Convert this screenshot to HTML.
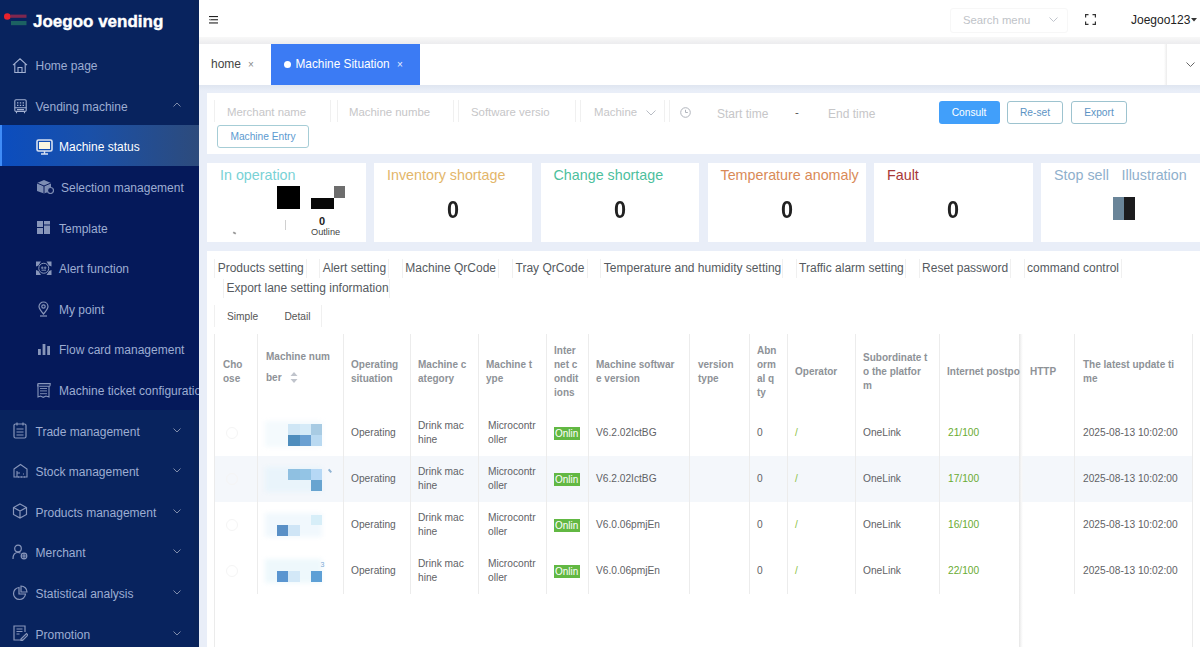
<!DOCTYPE html>
<html><head><meta charset="utf-8">
<style>
*{box-sizing:border-box;margin:0;padding:0}
html,body{width:1200px;height:647px;overflow:hidden;background:#e9eef8;font-family:"Liberation Sans",sans-serif;position:relative}
.abs{position:absolute}
#sb{position:absolute;left:0;top:0;width:199px;height:647px;background:#08235e;overflow:hidden}
#sb .edge{position:absolute;right:0;top:0;width:5px;height:647px;background:#09235a}
.logo{position:absolute;left:33px;top:11.7px;-webkit-text-stroke:0.4px #fff;color:#fff;font-weight:700;font-size:17px;letter-spacing:0px;white-space:nowrap}
.mi{position:absolute;left:0;width:199px;height:40.6px;color:#9dadd2;font-size:12px;white-space:nowrap}
.mi span{position:absolute;left:35.5px;top:15px}
.mi svg{position:absolute}
.sub{position:absolute;left:0;top:125.4px;width:199px;height:284.2px;background:#05195a}
.mi.s span{left:59px}
.mi.act{background:linear-gradient(90deg,#0b4dbf 0%,#1a50a8 45%,#2d4b7c 100%);color:#fff}
.mi.act:before{content:"";position:absolute;left:0;top:0;width:2px;height:100%;background:#3f8cf8}
.chev{position:absolute;left:173px;top:16px;width:8px;height:8px}
#hd{position:absolute;left:199px;top:0;width:1001px;height:38px;background:#fff}
#gap{position:absolute;left:199px;top:37px;width:1001px;height:7px;background:linear-gradient(#f8f8f8,#ececee)}
#tabs{position:absolute;left:199px;top:43.6px;width:1001px;height:41px;background:#fff}
.card{position:absolute;background:#fff}
.ph{position:absolute;color:#c6c6c8;font-size:11.4px;white-space:nowrap;margin-top:1px}
.inp{position:absolute;top:7px;height:22px;border-left:1px solid #f0f0f0;border-right:1px solid #f0f0f0}
.btn{position:absolute;height:23px;border-radius:3px;font-size:10.2px;text-align:center;line-height:21px;white-space:nowrap}
.sc-t{position:absolute;left:13px;top:4px;font-size:14.3px;white-space:nowrap}
.sc-n{position:absolute;left:0;width:158px;top:33px;text-align:center;font-weight:700;font-size:24px;color:#222;transform:scaleX(0.9)}
.tb{position:absolute;top:0;font-size:12px;color:#555a60;white-space:nowrap}
.th{position:absolute;top:334px;height:76px;font-weight:700;font-size:10px;color:#8e9297;line-height:14px}
.col{position:absolute;top:334px;width:1px;height:313px;background:#ececec}
.tbx{position:absolute;height:19px;border-left:1px solid #f0f0f0;border-right:1px solid #f0f0f0}
.badge{position:absolute;height:13px;width:25.5px;background:#62b843;color:#fff;font-size:10px;line-height:13px;padding-left:1px;overflow:hidden;white-space:nowrap}
.td{position:absolute;font-size:10.2px;color:#5f6266;line-height:14px;white-space:nowrap}
</style></head><body>

<!-- SIDEBAR -->
<div id="sb">
  <div class="edge"></div>
  <!-- logo -->
  <svg class="abs" style="left:3px;top:11px" width="26" height="16" viewBox="0 0 26 16">
    <rect x="7.5" y="3.6" width="16" height="3.2" fill="#b02a4a" opacity=".7"/>
    <rect x="8" y="10" width="15.5" height="4.2" fill="#2a8a66" opacity=".6"/>
    <circle cx="4.3" cy="5.5" r="3.3" fill="#e8222c"/>
  </svg>
  <div class="logo">Joegoo vending</div>

  <div class="sub"></div>

  <div class="mi" style="top:44.2px">
    <svg style="left:12px;top:13.5px" width="16" height="16" viewBox="0 0 16 16" fill="none" stroke="#a3b1d2" stroke-width="1.1"><path d="M1 7.2 L8 0.8 L15 7.2 M2.8 5.8 V14.5 H13.2 V5.8 M6 14.5 V9.5 H10 V14.5"/></svg>
    <span>Home page</span></div>
  <div class="mi" style="top:84.8px">
    <svg style="left:13.5px;top:14px" width="13" height="15" viewBox="0 0 13 15" fill="none" stroke="#a3b1d2" stroke-width="1.1"><rect x="0.8" y="0.8" width="11.4" height="11.6" rx="1.2"/><path d="M3 3.8h1.4M5.8 3.8h1.4M8.6 3.8h1.4M3 6.4h1.4M5.8 6.4h1.4M8.6 6.4h1.4" stroke-width="1.3"/><path d="M0.8 8.8h11.4M3 10.6h7M2.5 12.4v1.8M10.5 12.4v1.8"/></svg>
    <span>Vending machine</span>
    <svg class="chev" viewBox="0 0 8 8" fill="none" stroke="#7f8cab" stroke-width="1"><path d="M0.5 5.5 L4 2 L7.5 5.5"/></svg></div>

  <div class="mi s act" style="top:125.4px">
    <svg style="left:36px;top:14px" width="17" height="16" viewBox="0 0 17 16"><rect x="1" y="1" width="15" height="11" rx="1.5" fill="none" stroke="#d9e2f2" stroke-width="1.6"/><rect x="3" y="3" width="11" height="7" fill="#fbf6e0"/><path d="M8.5 12v3M5 15h7" stroke="#d9e2f2" stroke-width="1.4"/></svg>
    <span style="top:15px">Machine status</span></div>
  <div class="mi s" style="top:166px">
    <svg style="left:36px;top:13px" width="18" height="15" viewBox="0 0 18 15"><path d="M1 4 L8 1 L15 4 L15 12 L8 14.5 L1 12Z" fill="#7d8db3"/><path d="M1 4 L8 7 L15 4 M8 7V14.5" stroke="#0a1b5c" stroke-width="1" fill="none"/><circle cx="14.5" cy="11.5" r="3" fill="#0a1b5c" stroke="#7d8db3" stroke-width="1.2"/></svg>
    <span style="left:61px">Selection management</span></div>
  <div class="mi s" style="top:206.6px">
    <svg style="left:37px;top:14px" width="13" height="13" viewBox="0 0 13 13" fill="#8896ba"><rect x="0" y="0" width="6" height="6"/><rect x="7" y="0" width="6" height="3.5"/><rect x="7" y="4.5" width="6" height="8.5"/><rect x="0" y="7" width="6" height="6"/></svg>
    <span>Template</span></div>
  <div class="mi s" style="top:247.2px">
    <svg style="left:36px;top:14px" width="16" height="15" viewBox="0 0 16 15"><g fill="#8896ba"><path d="M0 0.5h5L2.5 4.5 0 5.5Z"/><path d="M15.5 0.5h-5L13 4.5 15.5 5.5Z"/><path d="M0 14h5L2.5 10 0 9Z"/><path d="M15.5 14h-5L13 10 15.5 9Z"/></g><g fill="none" stroke="#8896ba" stroke-width="1"><circle cx="7.75" cy="7.25" r="5"/></g><g fill="#6f7fa8"><circle cx="6.3" cy="6.8" r="1.2"/><circle cx="9.2" cy="6.8" r="1.2"/><rect x="5.5" y="8.6" width="4.5" height="1.2"/></g></svg>
    <span>Alert function</span></div>
  <div class="mi s" style="top:287.8px">
    <svg style="left:38px;top:13px" width="11" height="16" viewBox="0 0 11 16" fill="none" stroke="#8896ba" stroke-width="1.2"><path d="M5.5 13 C2 9 1 7 1 5.5 A4.5 4.5 0 0 1 10 5.5 C10 7 9 9 5.5 13Z"/><circle cx="5.5" cy="5.5" r="1.7"/><path d="M2 15h7"/></svg>
    <span>My point</span></div>
  <div class="mi s" style="top:328.4px">
    <svg style="left:38px;top:15.5px" width="12" height="12" viewBox="0 0 12 12" fill="#8896ba"><rect x="0" y="5" width="2.8" height="6"/><rect x="4.6" y="0" width="2.8" height="11"/><rect x="9.2" y="2" width="2.8" height="9"/></svg>
    <span>Flow card management</span></div>
  <div class="mi s" style="top:369px">
    <svg style="left:37px;top:14px" width="14" height="15" viewBox="0 0 14 15" fill="none" stroke="#8896ba" stroke-width="1.1"><path d="M0.8 3.5V1.2Q0.8 0.6 1.5 0.6H13.2Q13.2 3.3 12.5 3.3H2.2"/><path d="M1 1.5V14L3.5 13 6.2 14.3 9 13 12 14V3.3"/><path d="M3 5.5h7M3 7.9h7M3 10.7h7" stroke-width="0.9"/></svg>
    <span>Machine ticket configuration</span></div>

  <div class="mi" style="top:409.6px">
    <svg style="left:13px;top:12px" width="14" height="17" viewBox="0 0 14 17" fill="none" stroke="#8896ba" stroke-width="1.2"><rect x="1" y="2" width="12" height="14" rx="1.5"/><path d="M4 0.5v3M10 0.5v3M3.5 7h7M3.5 10h7M3.5 13h7"/></svg>
    <span>Trade management</span>
    <svg class="chev" viewBox="0 0 8 8" fill="none" stroke="#7f8cab" stroke-width="1"><path d="M0.5 2.5 L4 6 L7.5 2.5"/></svg></div>
  <div class="mi" style="top:450.2px">
    <svg style="left:13px;top:13px" width="15" height="15" viewBox="0 0 15 15" fill="none" stroke="#8896ba" stroke-width="1.1"><path d="M1 6 L7.5 1.5 L14 6 V14 H1Z"/><path d="M4 14V8M4 10h3M5 14h1M8 14h1M11 14h1M10 11h1"/></svg>
    <span>Stock management</span>
    <svg class="chev" viewBox="0 0 8 8" fill="none" stroke="#7f8cab" stroke-width="1"><path d="M0.5 2.5 L4 6 L7.5 2.5"/></svg></div>
  <div class="mi" style="top:490.8px">
    <svg style="left:12px;top:12.5px" width="16" height="16" viewBox="0 0 16 16" fill="none" stroke="#8896ba" stroke-width="1.2"><path d="M8 1 L14.5 4.5 V11.5 L8 15 L1.5 11.5 V4.5Z M1.5 4.5 L8 8 L14.5 4.5 M8 8 V15"/></svg>
    <span>Products management</span>
    <svg class="chev" viewBox="0 0 8 8" fill="none" stroke="#7f8cab" stroke-width="1"><path d="M0.5 2.5 L4 6 L7.5 2.5"/></svg></div>
  <div class="mi" style="top:531.4px">
    <svg style="left:12px;top:13px" width="16" height="16" viewBox="0 0 16 16" fill="none" stroke="#8896ba" stroke-width="1.2"><circle cx="6" cy="4.5" r="3.3"/><path d="M1 15 C1 10 3 8.5 6 8.5 C7 8.5 8 8.8 8.5 9.2"/><circle cx="12" cy="12" r="2.8"/><path d="M12 9.2v5.6M9.3 12h5.4"/></svg>
    <span>Merchant</span>
    <svg class="chev" viewBox="0 0 8 8" fill="none" stroke="#7f8cab" stroke-width="1"><path d="M0.5 2.5 L4 6 L7.5 2.5"/></svg></div>
  <div class="mi" style="top:572px">
    <svg style="left:12px;top:12.5px" width="16" height="16" viewBox="0 0 16 16" fill="none" stroke="#8896ba" stroke-width="1.2"><path d="M7 2.5 A6 6 0 1 0 13.5 9 H7Z"/><path d="M9 1 A6 6 0 0 1 15 7 H9Z"/></svg>
    <span>Statistical analysis</span>
    <svg class="chev" viewBox="0 0 8 8" fill="none" stroke="#7f8cab" stroke-width="1"><path d="M0.5 2.5 L4 6 L7.5 2.5"/></svg></div>
  <div class="mi" style="top:612.6px">
    <svg style="left:13px;top:12.5px" width="15" height="16" viewBox="0 0 15 16" fill="none" stroke="#8896ba" stroke-width="1.2"><path d="M10 15H1V1h11v6"/><path d="M3.5 4h6M3.5 6.5h6M3.5 9h3"/><path d="M8 14 L13.5 8.5 L15 10 L9.5 15.5 H8Z"/></svg>
    <span>Promotion</span>
    <svg class="chev" viewBox="0 0 8 8" fill="none" stroke="#7f8cab" stroke-width="1"><path d="M0.5 2.5 L4 6 L7.5 2.5"/></svg></div>
</div>

<!-- HEADER -->
<div id="hd">
  <svg class="abs" style="left:9.5px;top:15.6px" width="10" height="8" viewBox="0 0 10 8" fill="#222"><rect x="0" y="0" width="9" height="1.1"/><rect x="1.8" y="3.2" width="7.2" height="1.1"/><rect x="0" y="6.4" width="9" height="1.1"/><path d="M0 3.75 L1.4 2.8 V4.7Z"/></svg>
  <div class="abs" style="left:751px;top:8px;width:118px;height:25px;border:1px solid #f7f7f7;border-radius:3px"></div>
  <div class="ph" style="left:764px;top:13px;font-size:11.3px;color:#c0c3c8">Search menu</div>
  <svg class="abs" style="left:850px;top:17px" width="9" height="6" viewBox="0 0 9 6" fill="none" stroke="#c0c4cc" stroke-width="1"><path d="M0.5 0.5 L4.5 4.5 L8.5 0.5"/></svg>
  <svg class="abs" style="left:886px;top:14px" width="11" height="11" viewBox="0 0 11 11" fill="none" stroke="#333" stroke-width="1.2"><path d="M0.6 3.5V0.6H3.5M7.5 0.6H10.4V3.5M10.4 7.5V10.4H7.5M3.5 10.4H0.6V7.5"/></svg>
  <div class="abs" style="left:932px;top:12.5px;font-size:12px;color:#222;white-space:nowrap">Joegoo123</div>
  <svg class="abs" style="left:992px;top:18px" width="6" height="4" viewBox="0 0 6 4" fill="#333"><path d="M0 0H6L3 3.5Z"/></svg>
</div>
<div id="gap"></div>

<!-- TABS -->
<div id="tabs">
  <div class="abs" style="left:12px;top:13px;font-size:12px;color:#444;white-space:nowrap">home</div>
  <div class="abs" style="left:49px;top:15.5px;font-size:10px;color:#888">×</div>
  <div class="abs" style="left:72px;top:0;width:149px;height:41px;background:#3b7bf4"></div>
  <div class="abs" style="left:85px;top:17.5px;width:7px;height:7px;border-radius:50%;background:#fff"></div>
  <div class="abs" style="left:96.5px;top:13.7px;font-size:11.85px;color:#fff;white-space:nowrap">Machine Situation</div>
  <div class="abs" style="left:198px;top:15.5px;font-size:10px;color:#e8efff">×</div>
  <div class="abs" style="left:965px;top:0;width:3px;height:41px;background:linear-gradient(90deg,rgba(240,240,240,0),#ececec)"></div>
  <svg class="abs" style="left:986.5px;top:18px" width="9" height="5.5" viewBox="0 0 9 5.5" fill="none" stroke="#666" stroke-width="1"><path d="M0.5 0.5 L4.5 4.5 L8.5 0.5"/></svg>
</div>

<div class="abs" style="left:199px;top:84.6px;width:1001px;height:6px;background:linear-gradient(#dfe5f0,#e9eef8)"></div>
<!-- FILTER CARD -->
<div class="card" style="left:207px;top:93px;width:993px;height:61px">
  <div class="inp" style="left:7px;width:117px"></div>
  <div class="inp" style="left:129.5px;width:117px"></div>
  <div class="inp" style="left:251px;width:118px"></div>
  <div class="inp" style="left:373px;width:85px"></div>
  <div class="inp" style="left:462px;width:250px;border-right:none"></div>
  <div class="ph" style="left:20px;top:12px">Merchant name</div>
  <div class="ph" style="left:142px;top:12px">Machine numbe</div>
  <div class="ph" style="left:264px;top:12px">Software versio</div>
  <div class="ph" style="left:387px;top:12px">Machine</div>
  <svg class="abs" style="left:439px;top:17px" width="10" height="6" viewBox="0 0 10 6" fill="none" stroke="#b8bcc4" stroke-width="1"><path d="M0.5 0.5 L5 5 L9.5 0.5"/></svg>
  <svg class="abs" style="left:472.5px;top:13.5px" width="11" height="11" viewBox="0 0 11 11" fill="none" stroke="#b0b4bc" stroke-width="1"><circle cx="5.5" cy="5.5" r="4.8"/><path d="M5.5 2.8V5.5H7.8"/></svg>
  <div class="ph" style="left:510px;top:12.5px;font-size:12px">Start time</div>
  <div class="ph" style="left:588px;top:12px;color:#555">-</div>
  <div class="ph" style="left:621px;top:12.5px;font-size:12px">End time</div>
  <div class="btn" style="left:731.5px;top:8px;width:61px;background:#419ffa;color:#fff;line-height:23px">Consult</div>
  <div class="btn" style="left:800px;top:8px;width:56px;border:1px solid #9dc3cf;color:#5b93c4">Re-set</div>
  <div class="btn" style="left:864px;top:8px;width:56px;border:1px solid #9dc3cf;color:#5b93c4">Export</div>
  <div class="btn" style="left:10px;top:32px;width:92px;border:1px solid #a6cdd6;color:#5b9ad0">Machine Entry</div>
</div>

<!-- STATUS CARDS -->
<div class="card" style="left:207px;top:163px;width:159px;height:79px">
  <div class="sc-t" style="color:#79d2d6">In operation</div>
  <div class="abs" style="left:69.5px;top:23px;width:23px;height:23px;background:#000"></div>
  <div class="abs" style="left:103.5px;top:35px;width:23px;height:11px;background:#080808"></div>
  <div class="abs" style="left:126.5px;top:23px;width:11px;height:12px;background:#6d6d6d"></div>
  <div class="abs" style="left:78px;top:57px;width:1px;height:10px;background:#d0d0d0"></div>
  <div class="abs" style="left:26px;top:69px;width:3px;height:2px;background:#999;transform:rotate(30deg)"></div>
  <div class="abs" style="left:112px;top:52px;font-weight:700;font-size:11px;color:#222">0</div>
  <div class="abs" style="left:104px;top:64px;font-size:9.2px;color:#444">Outline</div>
</div>
<div class="card" style="left:374px;top:163px;width:158px;height:79px">
  <div class="sc-t" style="color:#e3b66a">Inventory shortage</div>
  <div class="sc-n">0</div>
</div>
<div class="card" style="left:540.5px;top:163px;width:158px;height:79px">
  <div class="sc-t" style="color:#4dbf9d">Change shortage</div>
  <div class="sc-n">0</div>
</div>
<div class="card" style="left:707.5px;top:163px;width:158px;height:79px">
  <div class="sc-t" style="color:#d98a57">Temperature anomaly</div>
  <div class="sc-n">0</div>
</div>
<div class="card" style="left:874px;top:163px;width:159px;height:79px">
  <div class="sc-t" style="color:#a73838">Fault</div>
  <div class="sc-n">0</div>
</div>
<div class="card" style="left:1041px;top:163px;width:159px;height:79px">
  <div class="sc-t" style="color:#8fb0cc">Stop sell</div><div class="sc-t" style="left:80.5px;color:#8fb0cc">Illustration</div>
  <div class="abs" style="left:72px;top:34px;width:11px;height:23px;background:#6a8599"></div>
  <div class="abs" style="left:83px;top:34px;width:11px;height:23px;background:#1c1c1e"></div>
</div>

<!-- MAIN CARD -->
<div class="card" style="left:207px;top:251px;width:993px;height:396px"></div>
<!--TABLE-->
<div class="tbx" style="left:214.2px;top:259px;width:92.6px"></div>
<div class="tb" style="left:217.7px;top:260.5px">Products setting</div>
<div class="tbx" style="left:319.2px;top:259px;width:70.3px"></div>
<div class="tb" style="left:322.7px;top:260.5px">Alert setting</div>
<div class="tbx" style="left:401.8px;top:259px;width:97.2px"></div>
<div class="tb" style="left:405.3px;top:260.5px">Machine QrCode</div>
<div class="tbx" style="left:512.0px;top:259px;width:75.8px"></div>
<div class="tb" style="left:515.5px;top:260.5px">Tray QrCode</div>
<div class="tbx" style="left:600.3px;top:259px;width:182.4px"></div>
<div class="tb" style="left:603.8px;top:260.5px">Temperature and humidity setting</div>
<div class="tbx" style="left:795.6px;top:259px;width:110.9px"></div>
<div class="tb" style="left:799.1px;top:260.5px">Traffic alarm setting</div>
<div class="tbx" style="left:918.6px;top:259px;width:92.6px"></div>
<div class="tb" style="left:922.1px;top:260.5px">Reset password</div>
<div class="tbx" style="left:1023.5px;top:259px;width:98.5px"></div>
<div class="tb" style="left:1027.0px;top:260.5px">command control</div>
<div class="tbx" style="left:223.0px;top:279px;width:167.4px"></div>
<div class="tb" style="left:226.5px;top:280.5px">Export lane setting information</div>
<div class="tbx" style="left:214px;top:305px;width:108px;height:22px"></div>
<div class="td" style="left:227px;top:309.5px;color:#555">Simple</div>
<div class="td" style="left:284.5px;top:309.5px;color:#555">Detail</div>
<div class="abs" style="left:214px;top:334px;width:979px;height:313px;border-left:1px solid #ebebeb;border-right:1px solid #ebebeb;"></div>
<div class="abs" style="left:215px;top:456px;width:977px;height:46px;background:#f4f7fb"></div>
<div class="col" style="left:257px;height:260px"></div>
<div class="col" style="left:343px;height:260px"></div>
<div class="col" style="left:410px;height:260px"></div>
<div class="col" style="left:478px;height:260px"></div>
<div class="col" style="left:546px;height:260px"></div>
<div class="col" style="left:588px;height:260px"></div>
<div class="col" style="left:689px;height:260px"></div>
<div class="col" style="left:748.5px;height:260px"></div>
<div class="col" style="left:787px;height:260px"></div>
<div class="col" style="left:854.5px;height:260px"></div>
<div class="col" style="left:939px;height:260px"></div>
<div class="abs" style="left:1019px;top:334px;width:4px;height:313px;background:linear-gradient(90deg,#e6e6e6,#f7f7f7 60%,rgba(255,255,255,0))"></div>
<div class="col" style="left:1074px;height:260px"></div>
<div class="th" style="left:223px;top:358.0px;height:28px">Cho<br>ose</div>
<div class="th" style="left:266px;top:350px;height:14px">Machine num</div><div class="th" style="left:266px;top:371px;height:14px">ber</div>
<div class="th" style="left:351px;top:358.0px;height:28px">Operating<br>situation</div>
<div class="th" style="left:418px;top:358.0px;height:28px">Machine c<br>ategory</div>
<div class="th" style="left:486px;top:358.0px;height:28px">Machine t<br>ype</div>
<div class="th" style="left:554px;top:344.0px;height:56px">Inter<br>net c<br>ondit<br>ions</div>
<div class="th" style="left:596px;top:358.0px;height:28px">Machine softwar<br>e version</div>
<div class="th" style="left:698px;top:358.0px;height:28px">version<br>type</div>
<div class="th" style="left:757px;top:344.0px;height:56px">Abn<br>orm<br>al q<br>ty</div>
<div class="th" style="left:795px;top:365.0px;height:14px">Operator</div>
<div class="th" style="left:863px;top:351.0px;height:42px">Subordinate t<br>o the platfor<br>m</div>
<div class="th" style="left:947px;top:365.0px;height:14px">Internet postpo</div>
<div class="th" style="left:1030px;top:365.0px;height:14px">HTTP</div>
<div class="th" style="left:1083px;top:358.0px;height:28px">The latest update ti<br>me</div>
<svg class="abs" style="left:290px;top:371px" width="8" height="13" viewBox="0 0 8 13" fill="#c0c4cc"><path d="M4 1 L7.5 5 H0.5Z M4 12 L7.5 8 H0.5Z"/></svg>
<div class="td" style="left:351px;top:426px">Operating</div>
<div class="td" style="left:418px;top:419px">Drink mac<br>hine</div>
<div class="td" style="left:488px;top:419px">Microcontr<br>oller</div>
<div class="badge" style="left:554px;top:426.5px">Onlin</div>
<div class="td" style="left:596px;top:426px">V6.2.02IctBG</div>
<div class="td" style="left:757px;top:426px">0</div>
<div class="td" style="left:795px;top:426px;color:#8bbf3f">/</div>
<div class="td" style="left:863px;top:426px">OneLink</div>
<div class="td" style="left:948px;top:426px;color:#6aab32">21/100</div>
<div class="td" style="left:1083px;top:426px">2025-08-13 10:02:00</div>
<div class="td" style="left:351px;top:472px">Operating</div>
<div class="td" style="left:418px;top:465px">Drink mac<br>hine</div>
<div class="td" style="left:488px;top:465px">Microcontr<br>oller</div>
<div class="badge" style="left:554px;top:472.5px">Onlin</div>
<div class="td" style="left:596px;top:472px">V6.2.02IctBG</div>
<div class="td" style="left:757px;top:472px">0</div>
<div class="td" style="left:795px;top:472px;color:#8bbf3f">/</div>
<div class="td" style="left:863px;top:472px">OneLink</div>
<div class="td" style="left:948px;top:472px;color:#6aab32">17/100</div>
<div class="td" style="left:1083px;top:472px">2025-08-13 10:02:00</div>
<div class="td" style="left:351px;top:518px">Operating</div>
<div class="td" style="left:418px;top:511px">Drink mac<br>hine</div>
<div class="td" style="left:488px;top:511px">Microcontr<br>oller</div>
<div class="badge" style="left:554px;top:518.5px">Onlin</div>
<div class="td" style="left:596px;top:518px">V6.0.06pmjEn</div>
<div class="td" style="left:757px;top:518px">0</div>
<div class="td" style="left:795px;top:518px;color:#8bbf3f">/</div>
<div class="td" style="left:863px;top:518px">OneLink</div>
<div class="td" style="left:948px;top:518px;color:#6aab32">16/100</div>
<div class="td" style="left:1083px;top:518px">2025-08-13 10:02:00</div>
<div class="td" style="left:351px;top:564px">Operating</div>
<div class="td" style="left:418px;top:557px">Drink mac<br>hine</div>
<div class="td" style="left:488px;top:557px">Microcontr<br>oller</div>
<div class="badge" style="left:554px;top:564.5px">Onlin</div>
<div class="td" style="left:596px;top:564px">V6.0.06pmjEn</div>
<div class="td" style="left:757px;top:564px">0</div>
<div class="td" style="left:795px;top:564px;color:#8bbf3f">/</div>
<div class="td" style="left:863px;top:564px">OneLink</div>
<div class="td" style="left:948px;top:564px;color:#6aab32">22/100</div>
<div class="td" style="left:1083px;top:564px">2025-08-13 10:02:00</div><div class="abs" style="left:265px;top:421px;width:57px;height:26px;background:#f4fafd;filter:blur(2px)"></div>
<div class="abs" style="left:265px;top:467px;width:57px;height:25px;background:#e9f4fb;filter:blur(2px)"></div>
<div class="abs" style="left:265px;top:513px;width:57px;height:24px;background:#f1f8fd;filter:blur(2px)"></div>
<div class="abs" style="left:265px;top:559px;width:57px;height:24px;background:#eef8fc;filter:blur(2px)"></div>
<div class="abs" style="left:329px;top:469px;width:1.5px;height:4px;background:#8fb3d3;transform:rotate(-40deg)"></div>
<div class="abs" style="left:320.5px;top:561px;font-size:7px;color:#7aaad6;font-family:'Liberation Sans'">3</div>
<div class="abs" style="left:288px;top:424px;width:11.5px;height:11px;background:#cfe6f5"></div>
<div class="abs" style="left:299.5px;top:424px;width:11.5px;height:11px;background:#d6ebf8"></div>
<div class="abs" style="left:311px;top:424px;width:11px;height:11px;background:#a8cbe3"></div>
<div class="abs" style="left:288px;top:435px;width:11.5px;height:11px;background:#4e8dbd"></div>
<div class="abs" style="left:299.5px;top:435px;width:11.5px;height:11px;background:#6aa0d2"></div>
<div class="abs" style="left:311px;top:435px;width:11px;height:11px;background:#b9d9f1"></div>
<div class="abs" style="left:288px;top:469px;width:11.5px;height:11px;background:#8fc0e1"></div>
<div class="abs" style="left:299.5px;top:469px;width:11.5px;height:11px;background:#93c4e5"></div>
<div class="abs" style="left:311px;top:469px;width:11px;height:11px;background:#b6d8f5"></div>
<div class="abs" style="left:311px;top:480px;width:11px;height:11px;background:#68a4d0"></div>
<div class="abs" style="left:276.8px;top:525px;width:11.2px;height:11px;background:#5a90c6"></div>
<div class="abs" style="left:288px;top:525px;width:11.5px;height:11px;background:#cfe5f6"></div>
<div class="abs" style="left:311px;top:514.5px;width:11px;height:10.5px;background:#d7eef8"></div>
<div class="abs" style="left:276.8px;top:570.5px;width:11.2px;height:11px;background:#5a95d0"></div>
<div class="abs" style="left:288px;top:570.5px;width:11.5px;height:11px;background:#d3e8f7"></div>
<div class="abs" style="left:311px;top:570.5px;width:11px;height:11px;background:#5ea0d6"></div>

<div class="abs" style="left:226px;top:427px;width:12px;height:12px;border:1.5px solid #f5f5f5;border-radius:50%"></div>
<div class="abs" style="left:226px;top:473px;width:12px;height:12px;border:1.5px solid #f5f5f5;border-radius:50%"></div>
<div class="abs" style="left:226px;top:519px;width:12px;height:12px;border:1.5px solid #f5f5f5;border-radius:50%"></div>
<div class="abs" style="left:226px;top:565px;width:12px;height:12px;border:1.5px solid #f5f5f5;border-radius:50%"></div>
<!--/TABLE-->

</body></html>
